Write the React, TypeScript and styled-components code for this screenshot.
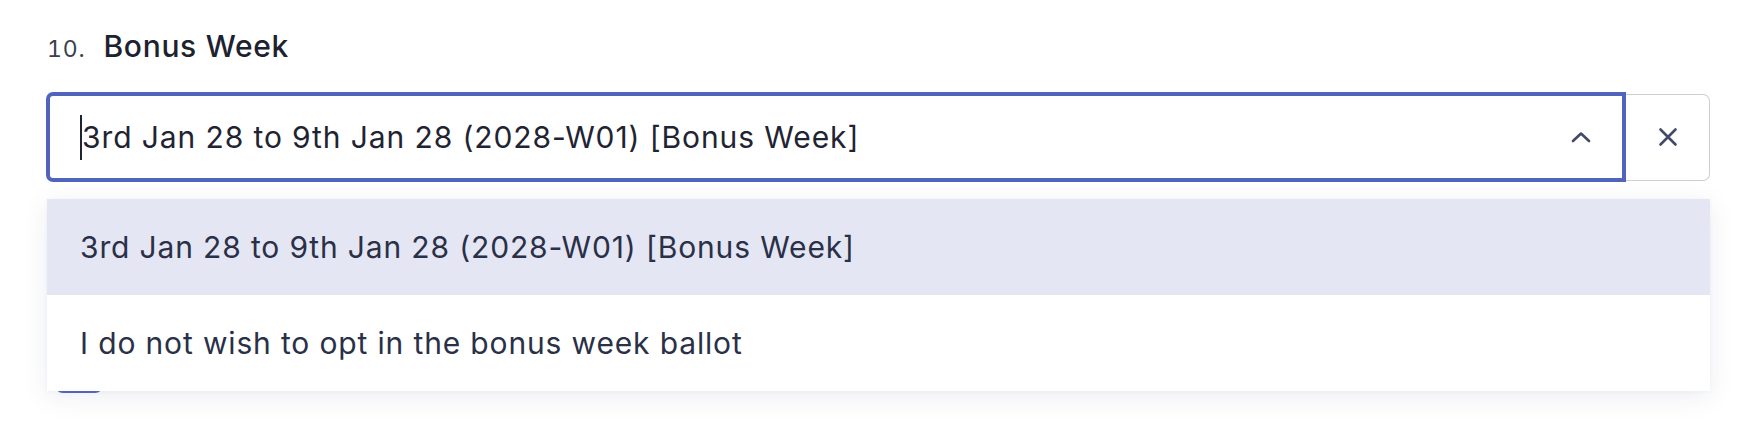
import React from 'react';
import styled, { createGlobalStyle } from 'styled-components';

const GlobalStyle = createGlobalStyle`
  html, body {
    margin: 0;
    padding: 0;
    background: #ffffff;
  }
  body {
    font-family: Inter, "Noto Sans", "Liberation Sans", sans-serif;
    -webkit-font-smoothing: antialiased;
  }
`;

const Page = styled.div`
  width: 1754px;
  height: 434px;
  box-sizing: border-box;
  padding: 28px 44px 0 46px;
  overflow: hidden;
`;

const QuestionHeader = styled.div`
  display: flex;
  align-items: baseline;
  gap: 18px;
  padding-left: 1px;
  height: 48px;
`;

const QuestionNumber = styled.span`
  font-size: 23px;
  letter-spacing: 0.8px;
  font-variant-numeric: tabular-nums;
  color: #3b404d;
`;

const QuestionTitle = styled.h2`
  margin: 0;
  font-size: 30px;
  font-weight: 500;
  letter-spacing: 0.7px;
  color: #1d2230;
`;

const FieldGroup = styled.div`
  position: relative;
  display: flex;
  align-items: center;
  margin-top: 16px;
`;

const SelectBox = styled.div`
  flex: 1;
  display: flex;
  align-items: center;
  height: 90px;
  box-sizing: border-box;
  padding: 0 31px 0 32px;
  border: 4px solid #5164bb;
  border-radius: 7px 0 0 7px;
  background: #ffffff;
`;

const SelectValue = styled.div`
  flex: 1;
  position: relative;
  font-size: 30px;
  letter-spacing: 0.9px;
  color: #1f2433;
  white-space: nowrap;
`;

const Caret = styled.span`
  position: absolute;
  left: -2px;
  top: -4px;
  bottom: -5px;
  width: 2px;
  background: #1f2433;
`;

const IconButton = styled.button`
  display: flex;
  align-items: center;
  justify-content: center;
  background: transparent;
  border: none;
  padding: 0;
  color: #434a68;
`;

const ClearButton = styled.button`
  width: 84px;
  height: 87px;
  box-sizing: border-box;
  display: flex;
  align-items: center;
  justify-content: center;
  background: #ffffff;
  border: 1px solid #cdced5;
  border-left: none;
  border-radius: 0 7px 7px 0;
  color: #434a68;
  padding: 0;
`;

const Menu = styled.ul`
  position: absolute;
  top: calc(100% + 17px);
  left: 1px;
  right: 0;
  margin: 0;
  padding: 0;
  list-style: none;
  background: #ffffff;
  box-shadow: 0 6px 26px rgba(30, 40, 90, 0.08), 0 1px 4px rgba(30, 40, 90, 0.04);
  z-index: 2;
`;

const Option = styled.li<{ $active?: boolean }>`
  height: 96px;
  display: flex;
  align-items: center;
  padding-left: 33px;
  font-size: 30px;
  letter-spacing: 0.85px;
  color: #2a3047;
  background: ${(p) => (p.$active ? '#e4e6f4' : '#ffffff')};
`;

const NextButton = styled.div`
  width: 48px;
  height: 40px;
  margin: 171px 0 0 9px;
  border-radius: 8px;
  background: #5a6bc0;
`;

const ChevronUp = () => (
  <svg width="20" height="12" viewBox="0 0 20 12" fill="none">
    <path d="M2 10 L10 2.5 L18 10" stroke="currentColor" strokeWidth="2.6" strokeLinecap="round" strokeLinejoin="round" />
  </svg>
);

const CloseIcon = () => (
  <svg width="20" height="20" viewBox="0 0 20 20" fill="none">
    <path d="M2.5 2.5 L17.5 17.5 M17.5 2.5 L2.5 17.5" stroke="currentColor" strokeWidth="2.6" strokeLinecap="round" />
  </svg>
);

const options = [
  '3rd Jan 28 to 9th Jan 28 (2028-W01) [Bonus Week]',
  'I do not wish to opt in the bonus week ballot',
];

const App: React.FC = () => {
  return (
    <>
      <GlobalStyle />
      <Page>
        <QuestionHeader>
          <QuestionNumber>10.</QuestionNumber>
          <QuestionTitle>Bonus Week</QuestionTitle>
        </QuestionHeader>
        <FieldGroup>
          <SelectBox>
            <SelectValue>
              <Caret />
              {options[0]}
            </SelectValue>
            <IconButton aria-label="Close menu">
              <ChevronUp />
            </IconButton>
          </SelectBox>
          <ClearButton aria-label="Clear selection">
            <CloseIcon />
          </ClearButton>
          <Menu>
            {options.map((o, i) => (
              <Option key={o} $active={i === 0}>
                {o}
              </Option>
            ))}
          </Menu>
        </FieldGroup>
        <NextButton />
      </Page>
    </>
  );
};

export default App;
